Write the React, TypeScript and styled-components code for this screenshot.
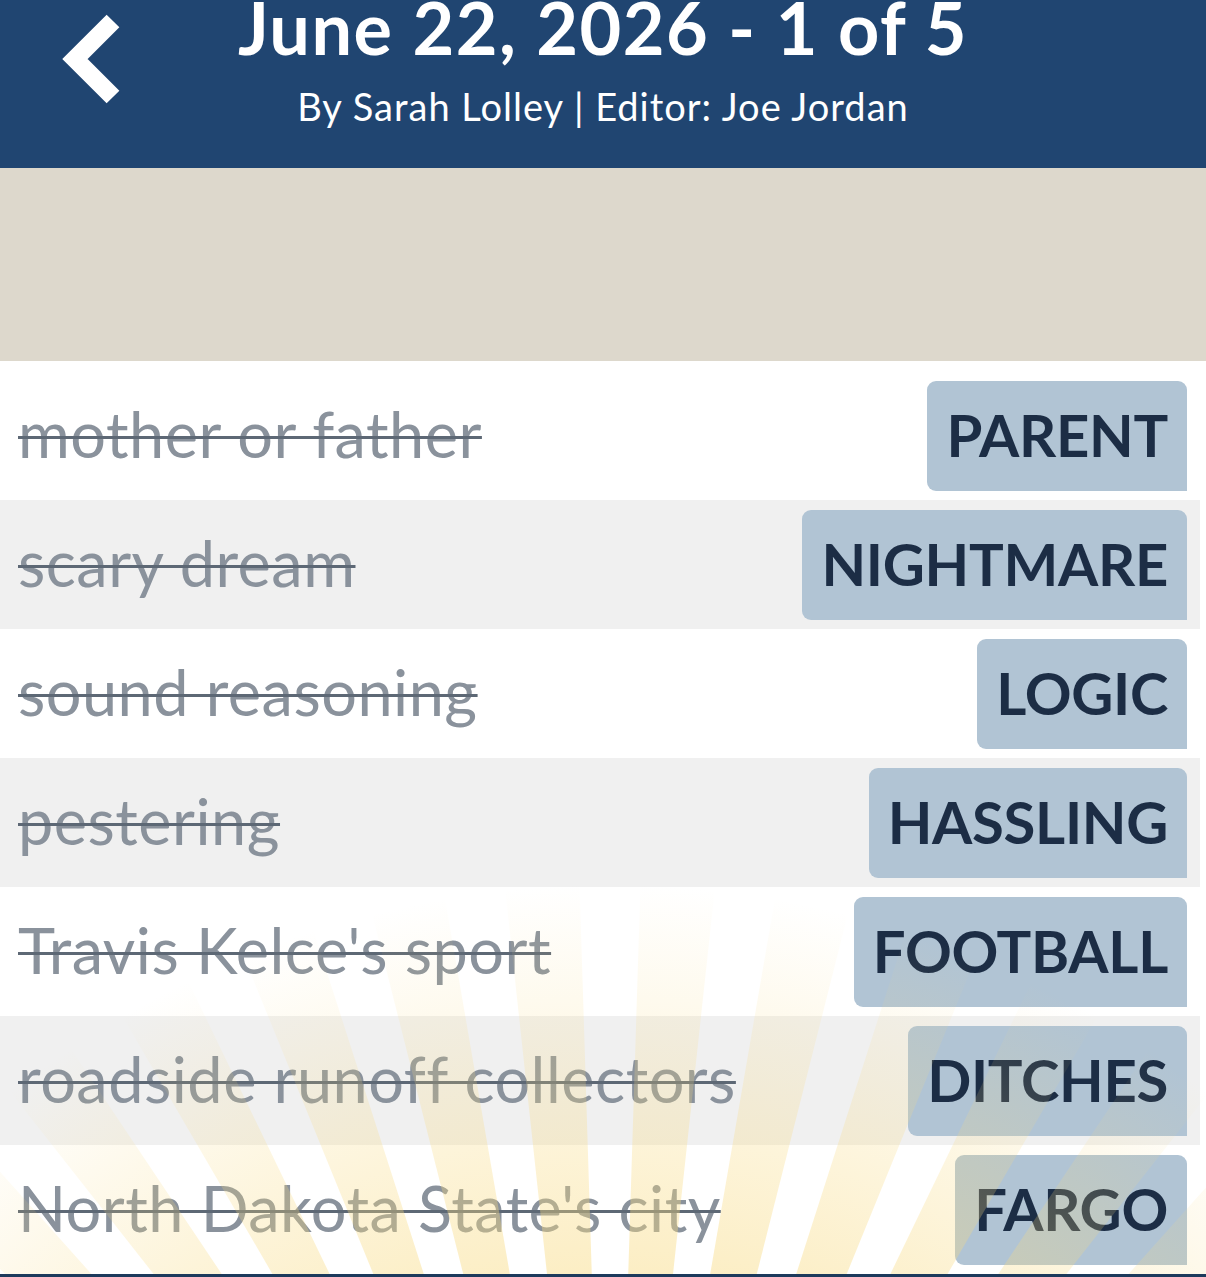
import React from 'react';
import styled, { createGlobalStyle } from 'styled-components';

const GlobalStyle = createGlobalStyle`
  html, body {
    margin: 0;
    padding: 0;
    background: #ffffff;
  }
  body {
    font-family: 'Lato', 'Open Sans', sans-serif;
    overflow: hidden;
  }
`;

const Page = styled.div`
  width: 1206px;
  display: flex;
  flex-direction: column;
`;

const Header = styled.header`
  height: 168px;
  background: #204571;
  color: #ffffff;
  display: grid;
  grid-template-columns: 120px 1fr 120px;
  overflow: hidden;
`;

const BackButton = styled.button`
  border: 0;
  background: none;
  padding: 0;
  width: 120px;
  height: 120px;
  cursor: pointer;
  align-self: start;
`;

const Heading = styled.div`
  display: flex;
  flex-direction: column;
  align-items: center;
`;

const Title = styled.h1`
  margin: -9px 0 0;
  font-size: 72px;
  line-height: 72px;
  font-weight: 700;
  letter-spacing: 1.5px;
  white-space: nowrap;
`;

const Byline = styled.div`
  margin-top: 24px;
  font-size: 38px;
  line-height: 38px;
  font-weight: 400;
  letter-spacing: 1px;
  white-space: nowrap;
`;

const Banner = styled.div`
  height: 193px;
  background: #ddd8cc;
`;

const List = styled.div`
  position: relative;
  padding: 10px 6px 0 0;
`;

const Row = styled.div<{ $shaded: boolean }>`
  height: 129px;
  box-sizing: border-box;
  padding: 0 13px 0 18px;
  display: flex;
  align-items: center;
  justify-content: space-between;
  background: ${(p) => (p.$shaded ? '#f0f0f0' : '#ffffff')};
`;

const Clue = styled.span`
  margin-bottom: 5px;
  font-size: 63px;
  line-height: 63px;
  letter-spacing: 0.5px;
  color: #8a929c;
  white-space: nowrap;
  text-decoration: line-through;
  text-decoration-color: #5d6875;
  text-decoration-thickness: 3px;
`;

const Answer = styled.div`
  height: 110px;
  box-sizing: border-box;
  padding: 0 19px 3px;
  display: flex;
  align-items: center;
  border-radius: 9px 9px 0 9px;
  background: #b1c4d4;
  color: #1c2d45;
  font-size: 58px;
  font-weight: 700;
  letter-spacing: -0.3px;
`;

const Rays = styled.svg`
  position: absolute;
  left: 0;
  bottom: 0;
  width: 1206px;
  height: 420px;
  pointer-events: none;
`;

const Footer = styled.div`
  height: 12px;
  background: #1d3a5c;
`;

const entries = [
  ['mother or father', 'PARENT'],
  ['scary dream', 'NIGHTMARE'],
  ['sound reasoning', 'LOGIC'],
  ['pestering', 'HASSLING'],
  ["Travis Kelce's sport", 'FOOTBALL'],
  ['roadside runoff collectors', 'DITCHES'],
  ["North Dakota State's city", 'FARGO'],
];

function Sunburst() {
  const cx = 610;
  const cy = 1000;
  const r = 1400;
  const wedges: string[] = [];
  for (let a = -52; a <= 52; a += 8) {
    const a1 = ((a - 2.2) * Math.PI) / 180;
    const a2 = ((a + 2.2) * Math.PI) / 180;
    const p1 = `${cx + r * Math.sin(a1)},${cy - r * Math.cos(a1)}`;
    const p2 = `${cx + r * Math.sin(a2)},${cy - r * Math.cos(a2)}`;
    wedges.push(`${cx},${cy} ${p1} ${p2}`);
  }
  return (
    <Rays viewBox="0 0 1206 420" preserveAspectRatio="none">
      <defs>
        <radialGradient id="glow" gradientUnits="userSpaceOnUse" cx={cx} cy={cy} r="1000">
          <stop offset="0.55" stopColor="#f8da80" stopOpacity="0.5" />
          <stop offset="0.97" stopColor="#f8da80" stopOpacity="0" />
        </radialGradient>
      </defs>
      {wedges.map((pts) => (
        <polygon key={pts} points={pts} fill="url(#glow)" />
      ))}
    </Rays>
  );
}

export default function App() {
  return (
    <Page>
      <GlobalStyle />
      <Header>
        <BackButton aria-label="Back">
          <svg width="120" height="120" viewBox="0 0 120 120">
            <polyline
              points="113,21 75,59 113,97"
              fill="none"
              stroke="#ffffff"
              strokeWidth="18"
              strokeLinejoin="miter"
            />
          </svg>
        </BackButton>
        <Heading>
          <Title>June 22, 2026 - 1 of 5</Title>
          <Byline>By Sarah Lolley | Editor: Joe Jordan</Byline>
        </Heading>
      </Header>
      <Banner />
      <List>
        {entries.map(([clue, answer], i) => (
          <Row key={answer} $shaded={i % 2 === 1}>
            <Clue>{clue}</Clue>
            <Answer>{answer}</Answer>
          </Row>
        ))}
        <Sunburst />
      </List>
      <Footer />
    </Page>
  );
}
